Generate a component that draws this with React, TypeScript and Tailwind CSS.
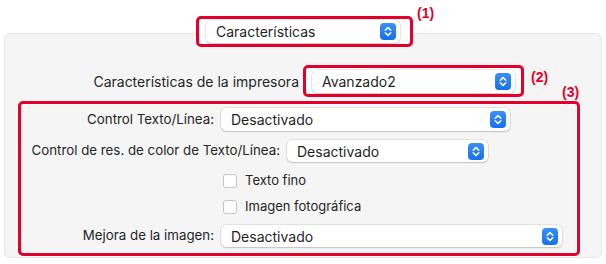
import React from 'react';

const Stepper: React.FC = () => (
  <svg width="16" height="17" viewBox="0 0 16 17" className="shrink-0">
    <defs>
      <linearGradient id="blueg" x1="0" y1="0" x2="0" y2="1">
        <stop offset="0" stopColor="#3a8ff8" />
        <stop offset="1" stopColor="#1570ef" />
      </linearGradient>
    </defs>
    <rect x="0" y="0" width="16" height="17" rx="4" fill="url(#blueg)" />
    <path d="M5.2 7.2 L8 4.6 L10.8 7.2" fill="none" stroke="white" strokeWidth="1.5" strokeLinecap="round" strokeLinejoin="round" />
    <path d="M5.2 9.8 L8 12.4 L10.8 9.8" fill="none" stroke="white" strokeWidth="1.5" strokeLinecap="round" strokeLinejoin="round" />
  </svg>
);

interface PopupProps {
  value: string;
  className?: string;
}

const Popup: React.FC<PopupProps> = ({ value, className = '' }) => (
  <div
    className={`flex items-center justify-between bg-white rounded-[5px] pl-[10px] pr-[4px] text-[14px] text-[#1f1f1f] shadow-[0_0_0_0.5px_rgba(0,0,0,0.16),0_1px_1.5px_rgba(0,0,0,0.14)] ${className}`}
  >
    <span>{value}</span>
    <Stepper />
  </div>
);

const Check: React.FC<{ label: string }> = ({ label }) => (
  <div className="flex items-center gap-[8px] pl-[202px] h-[14px]">
    <div className="w-[14px] h-[14px] rounded-[3px] bg-white border border-[#c6c6c6]" />
    <span className="text-[13px] text-[#262626]">{label}</span>
  </div>
);

export default function App() {
  return (
    <div className="relative w-[606px] h-[264px] bg-white overflow-hidden font-['Inter','Liberation_Sans',sans-serif]">
      {/* (1) Características */}
      <div className="relative z-10 pt-[16px] pl-[196px]">
        <div className="w-[217px] h-[31px] border-[3px] border-[#e4002b] rounded-[5px] bg-white pl-[7px] pt-[1px]">
          <Popup value="Características" className="w-[194px] h-[23px]" />
        </div>
      </div>

      {/* Panel */}
      <div className="mx-[4px] -mt-[14px] h-[225px] bg-[#f5f5f5] border border-[#e6e6e6] rounded-[6px]">
        <div className="flex items-center pt-[31px]">
          <div className="w-[295px] text-right pr-[1px] text-[14px] text-[#262626]">Características de la impresora</div>
          <div className="ml-[3px] w-[221px] h-[32px] border-[3px] border-[#e4002b] rounded-[5px] bg-white pl-[6px] pt-[2px]">
            <Popup value="Avanzado2" className="w-[203px] h-[23px]" />
          </div>
        </div>

        {/* (3) group */}
        <div className="ml-[13px] mt-[4px] w-[562px] h-[155px] border-[3px] border-[#e4002b] rounded-[5px] bg-[#f5f5f5] shadow-[0_0_0_1px_white,inset_0_0_0_1px_white]">
          <div className="flex items-center mt-[4px]">
            <div className="w-[193px] text-right text-[13.3px] text-[#262626]">Control Texto/Línea:</div>
            <Popup value="Desactivado" className="ml-[7px] w-[289px] h-[23px]" />
          </div>
          <div className="flex items-center mt-[9px]">
            <div className="w-[259px] text-right text-[13.3px] text-[#262626]">Control de res. de color de Texto/Línea:</div>
            <Popup value="Desactivado" className="ml-[7px] w-[201px] h-[22px]" />
          </div>
          <div className="mt-[12px]">
            <Check label="Texto fino" />
          </div>
          <div className="mt-[12px]">
            <Check label="Imagen fotográfica" />
          </div>
          <div className="flex items-center mt-[11px]">
            <div className="w-[193px] text-right text-[13.3px] text-[#262626]">Mejora de la imagen:</div>
            <Popup value="Desactivado" className="ml-[7px] w-[341px] h-[22px]" />
          </div>
        </div>
      </div>

      {/* Callout numbers */}
      <span className="absolute left-[417px] top-[3px] text-[14px] font-bold text-[#e4002b] font-['Liberation_Sans',sans-serif]">(1)</span>
      <span className="absolute left-[531px] top-[67px] text-[14px] font-bold text-[#e4002b] font-['Liberation_Sans',sans-serif]">(2)</span>
      <span className="absolute left-[562px] top-[82px] text-[14px] font-bold text-[#e4002b] font-['Liberation_Sans',sans-serif]">(3)</span>
    </div>
  );
}
